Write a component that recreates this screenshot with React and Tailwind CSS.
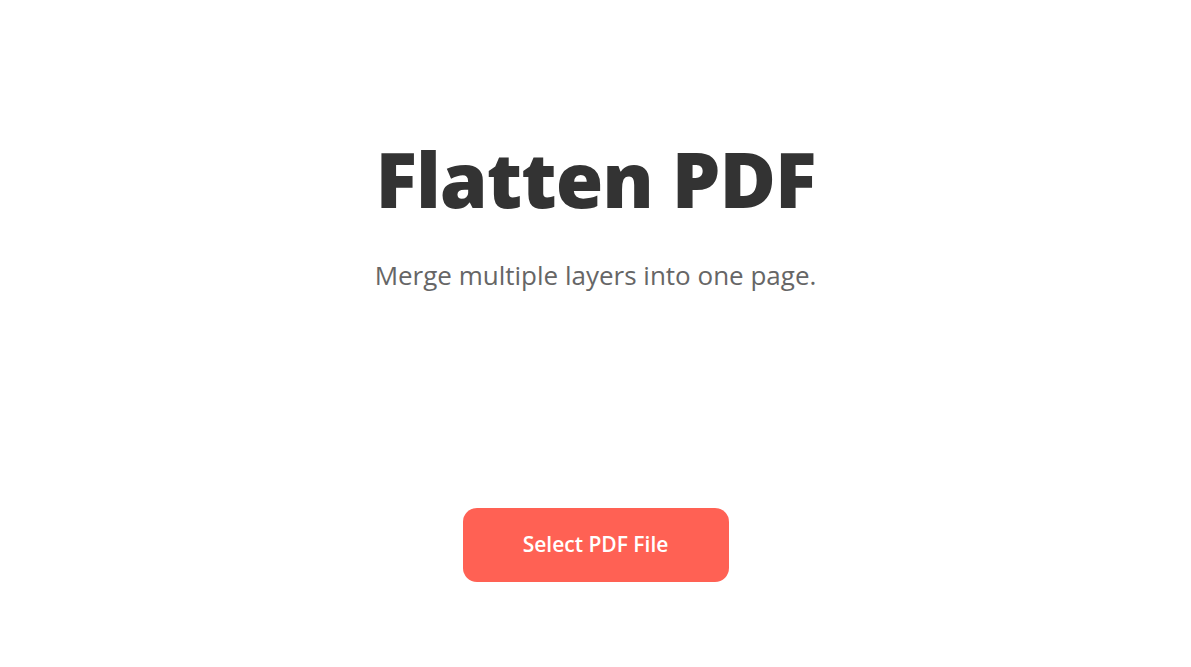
import React from 'react'

export default function App() {
  return (
    <div className="min-h-screen bg-white flex flex-col items-center" style={{ fontFamily: '"Open Sans", "Noto Sans", sans-serif' }}>
      <h1 className="mt-[133px] text-[77px] leading-[92px] font-extrabold text-[#333333] tracking-[-1px]">Flatten PDF</h1>
      <p className="mt-[32px] text-[26px] leading-[36px] text-[#666666]">Merge multiple layers into one page.</p>
      <button type="button"
        className="mt-[215px] w-[266px] h-[74px] rounded-[14px] bg-[#ff6154] text-white text-[21px] font-semibold">
        Select PDF File
      </button>
    </div>
  )
}
